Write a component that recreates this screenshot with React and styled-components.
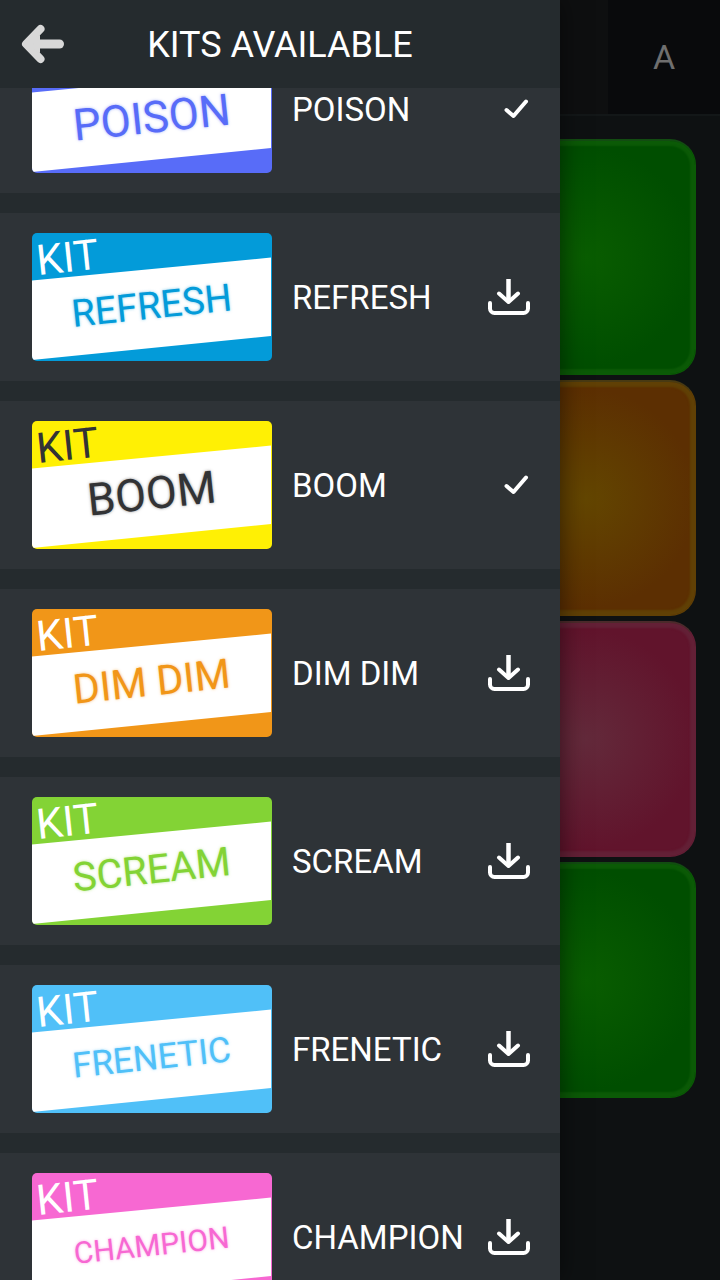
import { useLayoutEffect, useRef } from 'react';
import styled, { createGlobalStyle } from 'styled-components';

const kits = [
    { name: 'POISON', color: '#586cf8', size: 44, installed: true },
    { name: 'REFRESH', color: '#039bd9', size: 38 },
    { name: 'BOOM', color: '#fff004', ink: '#323335', size: 45, installed: true },
    { name: 'DIM DIM', color: '#f19618', size: 41 },
    { name: 'SCREAM', color: '#83d335', size: 40 },
    { name: 'FRENETIC', color: '#50c0f8', size: 35 },
    { name: 'CHAMPION', color: '#f768d2', size: 30 },
]

const padColors = {
    green: { core: '#095d00', base: '#004e00', edge: '#0b5a06' },
    orange: { core: '#634600', base: '#5c2f02', edge: '#604005' },
    pink: { core: '#632a3b', base: '#61142c', edge: '#632036' },
}

const padRows = ['green', 'orange', 'pink', 'green']

const START_SCROLL = 63

const BackArrow = () => (
    <svg width="44" height="40" viewBox="0 0 44 40" fill="none" stroke="#d8d8d8" strokeWidth="8" strokeLinecap="round" strokeLinejoin="round" aria-hidden="true">
        <path d="M19.500 5 5 20l14.500 15" />
        <path d="M8 20h30.500" strokeWidth="9" />
        <path d="M18 12v16l-8-8z" fill="#d8d8d8" strokeWidth="2" />
    </svg>
)

const DownloadIcon = () => (
    <svg width="42" height="38" viewBox="0 0 42 38" fill="none" stroke="#fff" strokeWidth="4" strokeLinecap="round" strokeLinejoin="round" aria-hidden="true">
        <path d="M20.500 1v23" strokeLinecap="butt" strokeWidth="4.500" />
        <path d="M11 15.500l9.500 8.500 9.500-8.500" />
        <path d="M2 25v5.500a4.500 4.500 0 0 0 4.500 4.500h29a4.500 4.500 0 0 0 4.500-4.500V25" />
    </svg>
)

const CheckIcon = () => (
    <svg width="26" height="22" viewBox="0 0 26 22" fill="none" stroke="#fff" strokeWidth="4" strokeLinecap="round" strokeLinejoin="round" role="img" aria-label="Installed">
        <path d="M2.500 12l7 6L22 3.500" />
    </svg>
)

const KitCover = ({ kit }) => (
    <Cover viewBox="0 0 240 128" aria-hidden="true">
        <rect width="240" height="128" fill={kit.color} />
        <path d="M0 47.500 239 24.500V103L0 127z" fill="#fff" />
        <CoverText x="6" y="42" $size={42} fill={kit.ink || '#fff'} transform="rotate(-6 6 42)">KIT</CoverText>
        <CoverText
            x="121"
            y={72 + kit.size * 0.355}
            $size={kit.size}
            $glow={kit.ink || kit.color}
            fill={kit.ink || kit.color}
            textAnchor="middle"
            transform="rotate(-6 121 86)"
        >
            {kit.name}
        </CoverText>
    </Cover>
)

const App = () => {

    const listRef = useRef(null)

    useLayoutEffect(() => {
        listRef.current.scrollTop = START_SCROLL
    }, [])

    return (
        <Screen>
            <GlobalStyle />
            <Board>
                <BoardBar>
                    <SideTab type="button">A</SideTab>
                </BoardBar>
                <Pads>
                    {padRows.map((tone, row) => (
                        [0, 1, 2].map((col) => (
                            <Pad key={`${row}-${col}`} type="button" aria-label={`Pad ${row * 3 + col + 1}`} $tone={padColors[tone]} />
                        ))
                    ))}
                </Pads>
            </Board>
            <Drawer>
                <DrawerHeader>
                    <BackButton type="button" aria-label="Back"><BackArrow /></BackButton>
                    <Title>KITS AVAILABLE</Title>
                </DrawerHeader>
                <KitList ref={listRef}>
                    {kits.map((kit) => (
                        <KitRow key={kit.name}>
                            <KitCover kit={kit} />
                            <KitName>{kit.name}</KitName>
                            {kit.installed ? (
                                <CheckIcon />
                            ) : (
                                <DownloadButton type="button" aria-label={`Download ${kit.name}`}><DownloadIcon /></DownloadButton>
                            )}
                        </KitRow>
                    ))}
                </KitList>
            </Drawer>
        </Screen>
    )
}

const GlobalStyle = createGlobalStyle`
    * {
        box-sizing: border-box;
    }

    body {
        margin: 0;
        background: #0e1112;
        font-family: Roboto, "Liberation Sans", sans-serif;
    }

    button {
        padding: 0;
        border: 0;
        background: none;
        color: inherit;
        font: inherit;
    }

    svg {
        display: block;
        flex: none;
    }
`

const Screen = styled.div`
    position: relative;
    height: 100vh;
    overflow: hidden;
`

const Board = styled.main`
    display: flex;
    flex-direction: column;
    gap: 23px;
    height: 100%;
`

const BoardBar = styled.div`
    display: flex;
    justify-content: flex-end;
    height: 116px;
    border-bottom: 2px solid #131718;
    background: #0e0f10;
`

const SideTab = styled.button`
    width: 112px;
    background: #090a0c;
    color: #6f6f6f;
    font-size: 34px;
`

const Pads = styled.div`
    display: grid;
    grid-template-columns: repeat(3, 1fr);
    gap: 5px;
    padding: 0 24px;
`

const Pad = styled.button`
    height: 236px;
    border: 1px solid ${(props) => props.$tone.edge};
    border-top: 2px solid #2d4a2b66;
    border-radius: 26px;
    background: radial-gradient(circle at 50% 50%, ${(props) => props.$tone.core}, ${(props) => props.$tone.base} 110px);
    box-shadow: inset 0 0 2px 5px ${(props) => props.$tone.edge};
`

const Drawer = styled.aside`
    position: absolute;
    inset: 0 160px 0 0;
    display: flex;
    flex-direction: column;
    background: #252b2e;
    box-shadow: 0 0 24px rgba(0, 0, 0, 0.5);
`

const DrawerHeader = styled.header`
    display: grid;
    grid-template-columns: 44px 1fr 44px;
    align-items: center;
    flex: none;
    height: 88px;
    padding: 0 21px;
`

const BackButton = styled.button`
    display: flex;
`

const Title = styled.h1`
    margin: 0;
    padding-top: 2px;
    color: #fff;
    font-size: 36px;
    font-weight: 400;
    line-height: 44px;
    text-align: center;
`

const KitList = styled.ul`
    display: flex;
    flex-direction: column;
    flex: 1;
    gap: 20px;
    min-height: 0;
    margin: 0;
    padding: 0;
    overflow-y: auto;
    list-style: none;
    scrollbar-width: none;
`

const KitRow = styled.li`
    display: flex;
    align-items: center;
    flex: none;
    gap: 20px;
    padding: 20px 30px 20px 32px;
    background: #2e3337;
`

const Cover = styled.svg`
    width: 240px;
    height: 128px;
    border-radius: 5px;
`

const CoverText = styled.text`
    font-size: ${(props) => props.$size}px;
    ${(props) => props.$glow && `text-shadow: 0 0 3px ${props.$glow}88;`}
`

const KitName = styled.span`
    flex: 1;
    padding-top: 2px;
    color: #fff;
    font-size: 33px;
    line-height: 40px;
    white-space: nowrap;
`

const DownloadButton = styled.button`
    display: flex;
    margin-left: -20px;
`

export default App
